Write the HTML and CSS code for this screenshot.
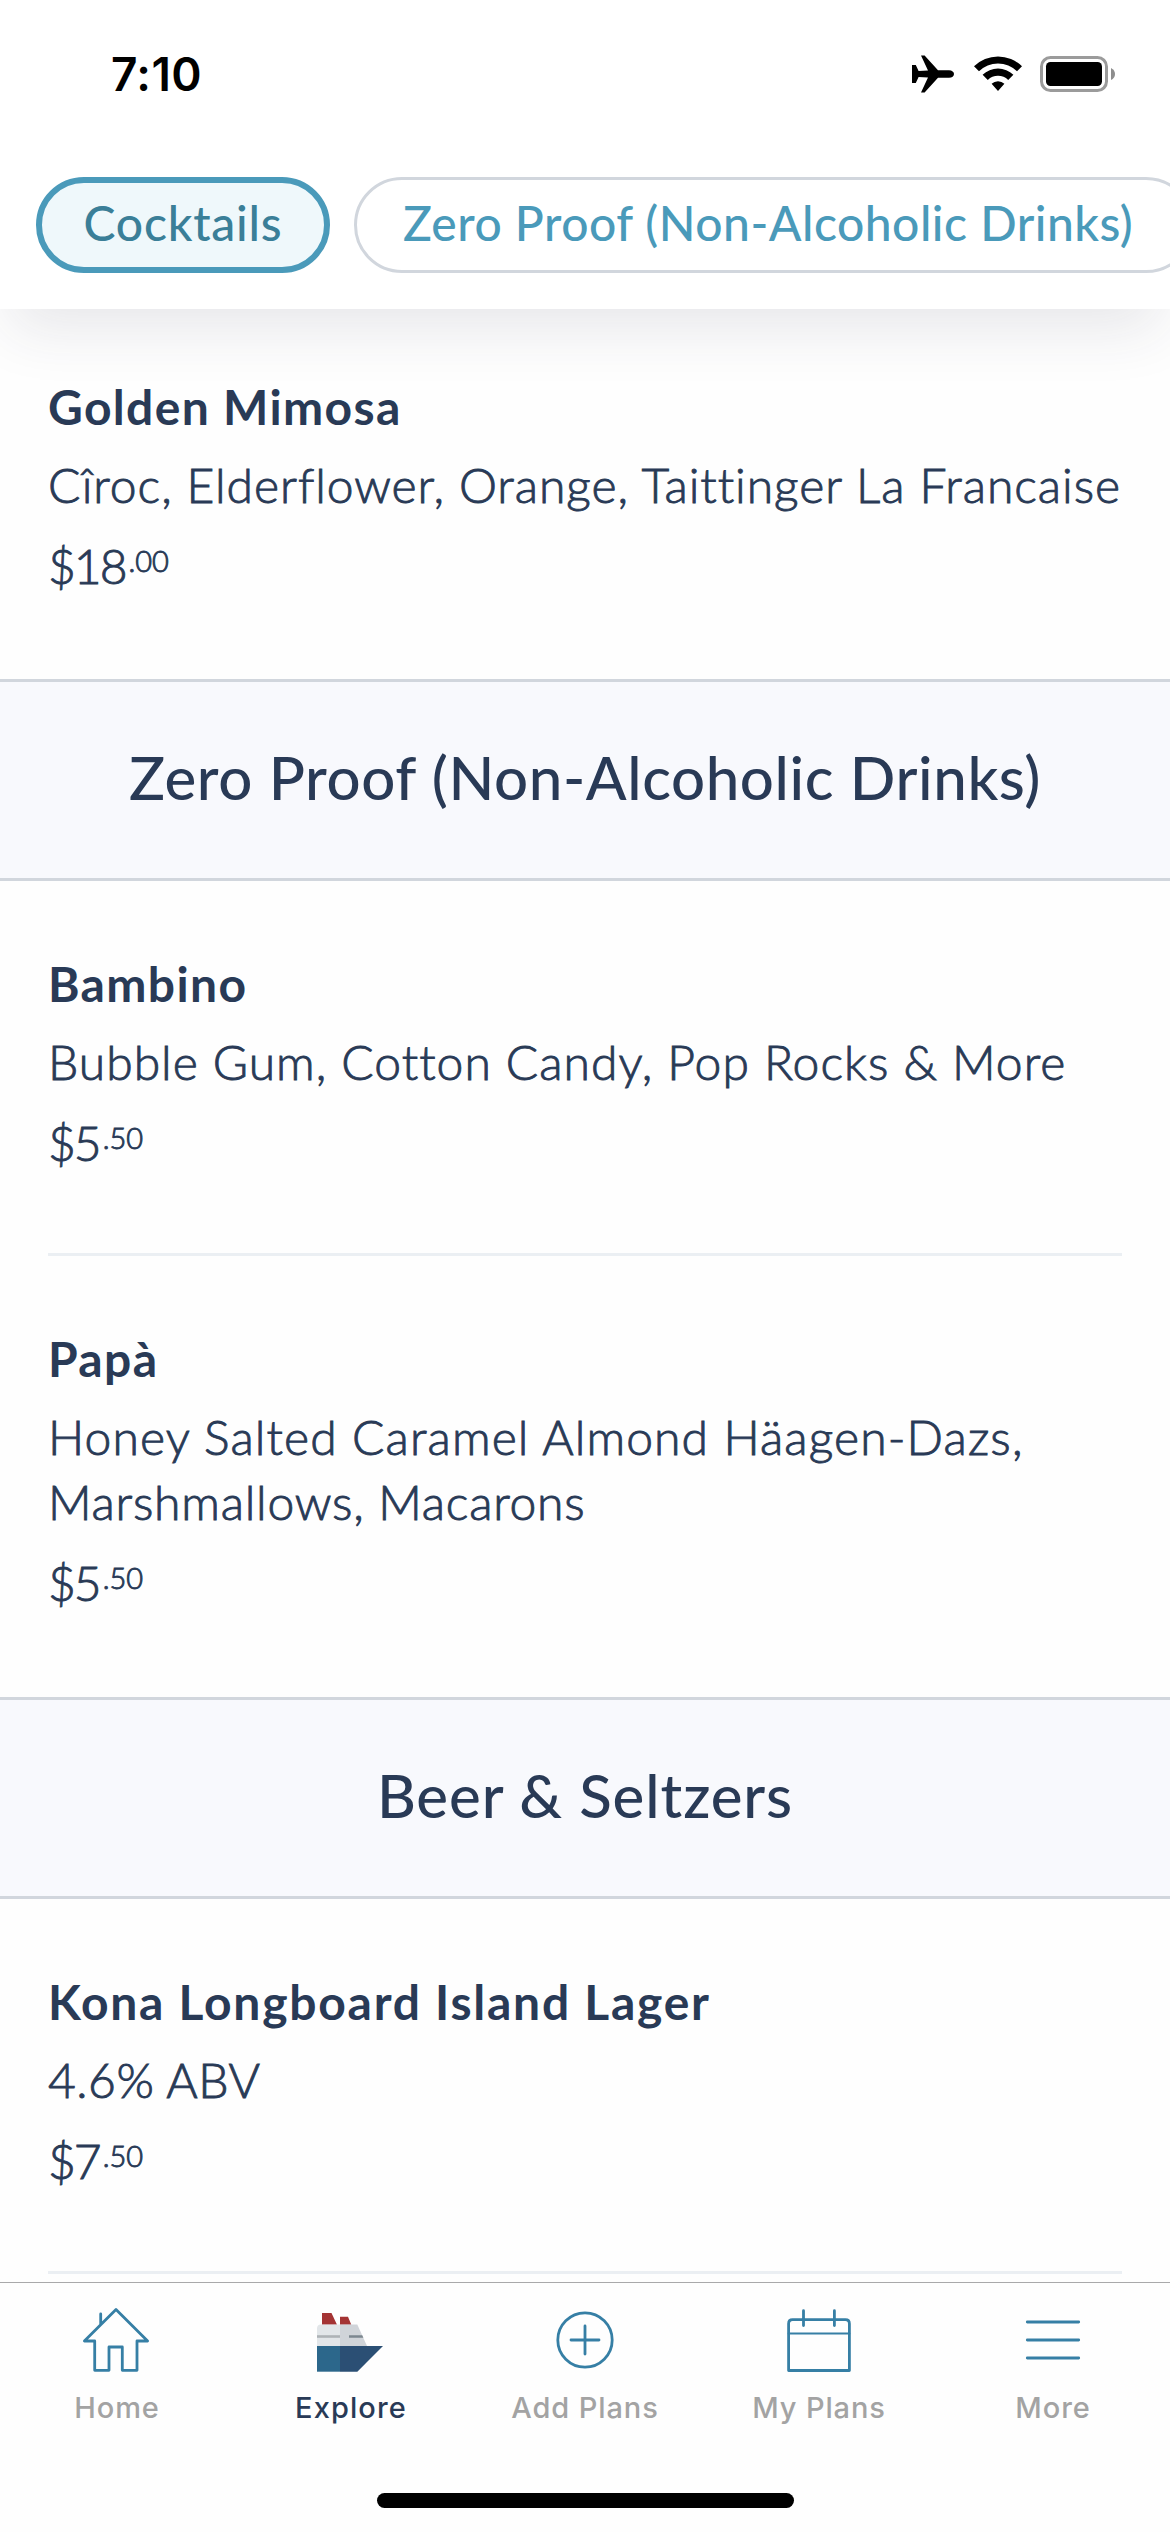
FILE: index.html
```html
<!DOCTYPE html>
<html lang="en">
<head>
<meta charset="utf-8">
<title>Bar Menu</title>
<link rel="stylesheet" href="styles.css">
</head>
<body>
<div class="screen">
  <header class="header">
    <div class="status">
      <span class="time">7:10</span>
      <div class="status-icons">
        <svg width="42" height="38" viewBox="0 0 42 38"><path d="M0 10H3.8L6.6 16L16 15.6L9 .4H12.6L26 15.2H37C40 15.2 42 17 42 19S40 22.8 37 22.8H26L12.6 37.6H9L16 22.4L6.6 22L3.8 28H0Z"/></svg>
        <svg width="48" height="38" viewBox="0 0 48 38"><path d="M0 11.3A34 34 0 0 1 48 11.3L43 16.3A27 27 0 0 0 5 16.3ZM8.6 19.8A22 22 0 0 1 39.4 19.8L34.2 25A14.5 14.5 0 0 0 13.8 25ZM17.6 28.8A9 9 0 0 1 30.4 28.8L24 36Z"/></svg>
        <svg class="battery" width="75" height="38" viewBox="0 0 75 38"><rect x="1.5" y="2.5" width="65" height="33" rx="9" fill="none" stroke="#9b9b9b" stroke-width="3"/><rect x="6" y="7" width="56" height="24" rx="4.5"/><path d="M71 13Q75 15 75 19T71 25Z" fill="#8e8e8e"/></svg>
      </div>
    </div>
    <nav class="pills">
      <a class="pill pill-active">Cocktails</a>
      <a class="pill">Zero Proof (Non-Alcoholic Drinks)</a>
    </nav>
  </header>

  <main class="menu">
    <article class="item item-first">
      <h3 class="name">Golden Mimosa</h3>
      <p class="desc desc-long">Cîroc, Elderflower, Orange, Taittinger La Francaise</p>
      <p class="price">$18<span class="cents">.00</span></p>
    </article>

    <h2 class="section">Zero Proof (Non-Alcoholic Drinks)</h2>
    <article class="item">
      <h3 class="name">Bambino</h3>
      <p class="desc">Bubble Gum, Cotton Candy, Pop Rocks &amp; More</p>
      <p class="price">$5<span class="cents">.50</span></p>
    </article>
    <hr class="divider">
    <article class="item item-last">
      <h3 class="name">Papà</h3>
      <p class="desc desc-honey">Honey Salted Caramel Almond Häagen-Dazs, <span class="desc-tight">Marshmallows, Macarons</span></p>
      <p class="price">$5<span class="cents">.50</span></p>
    </article>

    <h2 class="section section-wide">Beer &amp; Seltzers</h2>
    <article class="item">
      <h3 class="name name-wide">Kona Longboard Island Lager</h3>
      <p class="desc desc-abv">4.6% ABV</p>
      <p class="price">$7<span class="cents">.50</span></p>
    </article>
    <hr class="divider">
  </main>

  <footer class="tabbar">
    <nav class="tabs">
      <a class="tab">
        <svg class="icon" viewBox="0 0 72 66"><path d="M35 2.6L3.4 34H13.7V63.3H28V40H41.3V63.3H56V34H66.6ZM19.7 7V17.5"/></svg>
        <span>Home</span>
      </a>
      <a class="tab tab-active">
        <svg class="ship" viewBox="0 0 72 66">
          <path fill="#a43434" d="M7 6H16.5L22 17.7H7ZM25 9.7H33L36.3 17.7H25Z"/>
          <path fill="#e2e6e9" d="M6 17.5H25V39H2V21.5Q2 17.5 6 17.5Z"/>
          <path fill="#d0d4d9" d="M25 17.5H42.3L52 39H25Z"/>
          <path fill="#aeb3b6" d="M2 28.2H25V30.8H2Z"/>
          <path fill="#7c878f" d="M34 28.2H47.2L48.4 30.8H34Z"/>
          <path fill="#2c678b" d="M2 39H25V64.7H2Z"/>
          <path fill="#2b4f74" d="M25 39H68L42.3 64.7H25Z"/>
        </svg>
        <span>Explore</span>
      </a>
      <a class="tab">
        <svg class="icon" viewBox="0 0 72 66"><circle cx="36" cy="33" r="27.2"/><path d="M36 19V47M22 33H50"/></svg>
        <span>Add Plans</span>
      </a>
      <a class="tab">
        <svg class="icon" viewBox="0 0 72 66"><path d="M5.6 63.5V16.7Q5.6 12.7 9.6 12.7H62.4Q66.4 12.7 66.4 16.7V63.5ZM20.5 3.7V18.5M51.4 3.7V18.5"/><path stroke-width="2" d="M5.6 26.6H66.4"/></svg>
        <span>My Plans</span>
      </a>
      <a class="tab">
        <svg class="icon" viewBox="0 0 72 66"><path d="M10.3 15H61.7M10.3 33H61.7M10.3 51H61.7"/></svg>
        <span>More</span>
      </a>
    </nav>
    <div class="home-indicator"></div>
  </footer>
</div>
</body>
</html>
```
FILE: styles.css
```css
* {
  box-sizing: border-box;
  margin: 0;
  padding: 0;
}

body {
  background: #fefefe;
  color: #293a56;
  font-family: Lato, "Open Sans", sans-serif;
  font-size: 48px;
}

.screen {
  display: flex;
  flex-direction: column;
  width: 1170px;
  height: 2532px;
  overflow: hidden;
}

/* Header */
.header {
  position: relative;
  z-index: 1;
  flex: none;
  height: 309px;
  background: #fff;
  box-shadow: 0 30px 56px -10px rgba(42, 50, 70, 0.11);
}

.status {
  display: flex;
  justify-content: space-between;
  align-items: flex-start;
  height: 177px;
  padding: 46px 55px 0 111px;
}

.time {
  font: 600 46px/56px Inter, sans-serif;
  letter-spacing: 0.4px;
  color: #000;
}

.status-icons {
  display: flex;
  gap: 20px;
  padding-top: 9px;
}

.battery {
  margin-left: -2px;
}

.pills {
  display: flex;
  gap: 24px;
  padding-left: 36px;
}

.pill {
  flex: none;
  width: 840px;
  height: 96px;
  padding-left: 46px;
  border: 3px solid #d1d6dd;
  border-radius: 48px;
  color: #4a9aba;
  font-weight: 500;
  letter-spacing: 0.5px;
  line-height: 86px;
  white-space: nowrap;
}

.pill-active {
  width: 294px;
  padding-left: 0;
  border: 6px solid #4a9aba;
  background: #eff8fb;
  color: #3a7f98;
  letter-spacing: 0.8px;
  line-height: 80px;
  text-align: center;
}

/* Menu list */
.menu {
  flex: 1;
  min-height: 0;
  overflow: hidden;
}

.item {
  padding: 70px 48px 78px;
}

.item-first {
  padding-top: 65px;
  padding-bottom: 81px;
}

.item-last {
  padding-bottom: 82px;
}

.name {
  font-size: 48px;
  font-weight: 700;
  letter-spacing: 1.35px;
  line-height: 65px;
}

.name-wide {
  letter-spacing: 1.75px;
}

.desc,
.price {
  font-weight: 300;
  line-height: 65px;
  -webkit-text-stroke: 0.9px currentColor;
}

.desc {
  margin-top: 13px;
  letter-spacing: 1.02px;
}

.desc-long {
  letter-spacing: 0.95px;
  white-space: nowrap;
}

.desc-honey {
  letter-spacing: 1.14px;
}

.desc-tight {
  letter-spacing: 0.76px;
}

.desc-abv {
  letter-spacing: 0.5px;
}

.price {
  margin-top: 16px;
  letter-spacing: -2px;
}

.cents {
  margin-left: 3px;
  font-size: 29px;
  letter-spacing: 0;
  line-height: 0;
  vertical-align: 12px;
}

.divider {
  height: 3px;
  margin: 0 48px;
  border: 0;
  background: #ebeff3;
}

.section {
  height: 202px;
  padding-top: 59px;
  border: solid #d1d6dd;
  border-width: 3px 0;
  background: #f8f9fd;
  font-size: 60px;
  font-weight: 500;
  letter-spacing: 0.6px;
  line-height: 72px;
  text-align: center;
}

.section-wide {
  letter-spacing: 0.9px;
}

/* Tab bar */
.tabbar {
  flex: none;
  height: 250px;
  border-top: 1px solid #a9a9aa;
  background: #fefefe;
}

.tabs {
  display: grid;
  grid-template-columns: repeat(5, 1fr);
  height: 210px;
  padding-top: 24px;
}

.tab {
  display: flex;
  flex-direction: column;
  align-items: center;
  gap: 17px;
  color: #a3a3a3;
  font: 500 29px/36px Inter, sans-serif;
  letter-spacing: 0.9px;
}

.tab-active {
  color: #293a56;
  letter-spacing: 1.1px;
}

.icon,
.ship {
  width: 72px;
  height: 66px;
}

.icon {
  fill: none;
  stroke: #367fa5;
  stroke-width: 2.8;
  stroke-linecap: round;
  stroke-linejoin: round;
}

.home-indicator {
  width: 417px;
  height: 15px;
  margin: 0 auto;
  border-radius: 8px;
  background: #000;
}
```
